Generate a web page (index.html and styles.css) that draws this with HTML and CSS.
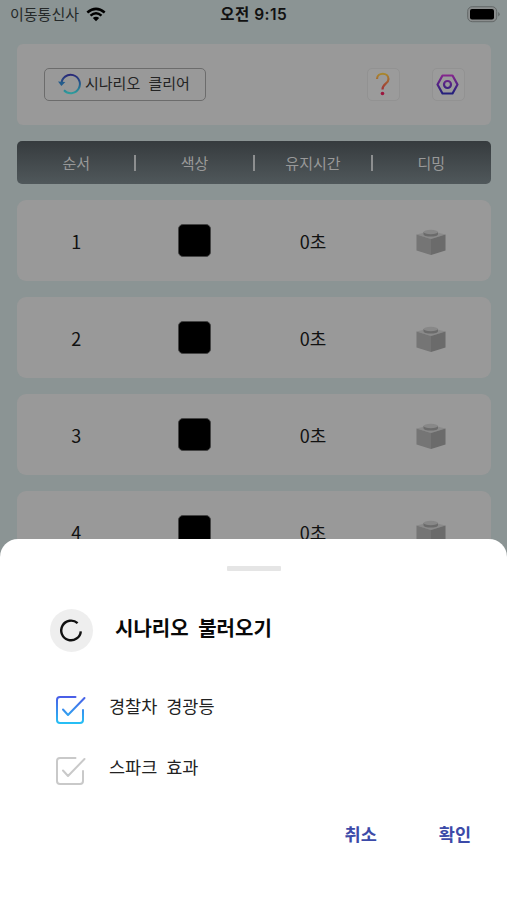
FILE: index.html
```html
<!DOCTYPE html>
<html lang="ko">
<head>
<meta charset="utf-8">
<meta name="viewport" content="width=device-width, initial-scale=1">
<title>시나리오</title>
<link rel="stylesheet" href="styles.css">
</head>
<body>
<svg class="defs" width="0" height="0" aria-hidden="true">
  <defs>
    <linearGradient id="refresh" x1="0" y1="0" x2="0" y2="1"><stop offset="0" stop-color="#292878"/><stop offset=".5" stop-color="#245c8c"/><stop offset="1" stop-color="#2e9c9c"/></linearGradient>
    <linearGradient id="gear" x1="0" y1="4" x2="0" y2="25" gradientUnits="userSpaceOnUse"><stop offset="0" stop-color="#962790"/><stop offset="1" stop-color="#24207c"/></linearGradient>
    <linearGradient id="help" x1="0" y1="5" x2="0" y2="27" gradientUnits="userSpaceOnUse"><stop offset="0" stop-color="#a98b2c"/><stop offset="1" stop-color="#9c163e"/></linearGradient>
    <linearGradient id="check" x1="0" y1="1" x2="0" y2="29" gradientUnits="userSpaceOnUse"><stop offset="0" stop-color="#4b5be6"/><stop offset="1" stop-color="#25c2f5"/></linearGradient>
    <symbol id="brick" viewBox="0 0 30 27">
      <path fill="#8a8a8a" d="M.5 5.500 15 2 29.500 5.500 15 10z"/>
      <path fill="#757575" d="M.5 5.500 15 10V26L.5 21.500z"/>
      <path fill="#6b6b6b" d="M15 10 29.500 5.500V21.500L15 26z"/>
      <path fill="#6b6b6b" d="M7.500 3v2.200c0 3.200 14.500 3.200 14.500 0V3z"/>
      <ellipse cx="14.750" cy="3" rx="7.250" ry="2.200" fill="#888"/>
    </symbol>
    <symbol id="box" viewBox="0 0 32 30">
      <path d="M21.500 2H6Q3 2 3 5V25Q3 28 6 28H26Q29 28 29 25V15M30.500 3 14 20 9 14.500" fill="none" stroke-width="2" stroke-linecap="round" stroke-linejoin="round"/>
    </symbol>
  </defs>
</svg>
<div class="screen">
  <header class="status">
    <div class="carrier">이동통신사
      <svg class="wifi" width="20" height="15" viewBox="0 0 20 15"><path d="M1.300 5.500Q10-1.800 18.700 5.500M4.500 8.600Q10 4 15.500 8.600" fill="none" stroke="#000" stroke-width="2.500"/><path d="M6.800 11Q10 8.300 13.200 11L10 14.300z"/></svg>
    </div>
    <div class="time">오전 9:15</div>
    <svg class="battery" width="34" height="17" viewBox="0 0 34 17"><rect x=".7" y=".7" width="29" height="15" rx="4.500" fill="#8b8e8e" stroke="#636868"/><rect x="3" y="3" width="24" height="10.500" rx="2"/><path d="M31.200 6q3 2.200 0 4.500z" fill="#636868"/></svg>
  </header>
  <section class="toolbar">
    <div class="clear">
      <svg width="24" height="22" viewBox="0 0 24 22"><path d="M3.500 11A9.200 9.200 0 1 1 6 17.300" fill="none" stroke="url(#refresh)" stroke-width="2"/><path d="M0 8.500 3.400 13 7.300 9z" fill="#245c8c"/></svg>
      <span>시나리오 클리어</span>
    </div>
    <div class="tools">
      <div class="tool"><svg width="32" height="32" viewBox="0 0 32 32"><path d="M10 11C10 4 21.500 4 21.500 11C21.500 16 15.500 15.500 15.500 21.500" fill="none" stroke="url(#help)" stroke-width="2.200"/><circle cx="15.500" cy="25.500" r="1.800" fill="#9c163e"/></svg></div>
      <div class="tool"><svg width="32" height="32" viewBox="0 0 32 32"><g fill="none" stroke="url(#gear)" stroke-width="2.200" stroke-linejoin="round"><path d="M10.500 7.500H20.500L25.500 16.500 20.500 25.500H10.500L5.500 16.500z"/><circle cx="15.500" cy="16.500" r="3.500"/></g></svg></div>
    </div>
  </section>
  <section class="columns head"><span>순서</span><span>색상</span><span>유지시간</span><span>디밍</span></section>
  <section class="columns row"><span>1</span><i class="swatch"></i><span>0초</span><svg class="brick"><use href="#brick"/></svg></section>
  <section class="columns row"><span>2</span><i class="swatch"></i><span>0초</span><svg class="brick"><use href="#brick"/></svg></section>
  <section class="columns row"><span>3</span><i class="swatch"></i><span>0초</span><svg class="brick"><use href="#brick"/></svg></section>
  <section class="columns row"><span>4</span><i class="swatch"></i><span>0초</span><svg class="brick"><use href="#brick"/></svg></section>
</div>
<div class="sheet">
  <div class="handle"></div>
  <div class="title">
    <div class="badge"><svg width="24" height="24" viewBox="0 0 24 24"><path d="M17.600 4.200A9.800 9.800 0 1 0 20.800 12.300" fill="none" stroke="#111" stroke-width="2.400"/></svg></div>
    <h1>시나리오 불러오기</h1>
  </div>
  <div class="option"><svg class="box on"><use href="#box"/></svg><span>경찰차 경광등</span></div>
  <div class="option"><svg class="box"><use href="#box"/></svg><span>스파크 효과</span></div>
  <div class="actions"><span>취소</span><span>확인</span></div>
</div>
</body>
</html>
```

FILE: styles.css
```css
* { box-sizing: border-box; }
body {
  margin: 0;
  width: 507px;
  height: 900px;
  overflow: hidden;
  position: relative;
  background: #8b9494;
  font-family: "Noto Sans CJK KR", sans-serif;
  color: #111;
}
svg { display: block; flex: none; }
.defs { position: absolute; }
.screen { height: 900px; padding: 0 16.500px 0 17px; overflow: hidden; }
.status {
  height: 44px;
  margin: 0 -10px 0 -7px;
  display: grid;
  grid-template-columns: 1fr auto 1fr;
  align-items: start;
  font-size: 15px;
  line-height: 20px;
  padding-top: 4px;
}
.carrier { display: flex; gap: 7px; color: #252929; }
.wifi { margin-top: 3px; }
.time { font-family: Inter, "Noto Sans CJK KR", sans-serif; font-size: 15.500px; font-weight: 600; letter-spacing: .5px; padding-top: 1px; margin-left: -3px; }
.battery { justify-self: end; margin: 2px 0 0; }
.toolbar {
  height: 81px;
  padding: 0 26px 0 27px;
  display: flex;
  align-items: center;
  justify-content: space-between;
  background: #999;
  border-radius: 6px;
}
.clear {
  width: 162px;
  height: 33px;
  padding-left: 13px;
  display: flex;
  align-items: center;
  gap: 3px;
  border: 1.500px solid #6c6c6c;
  border-radius: 5px;
  font-size: 15px;
  line-height: 20px;
  word-spacing: 4px;
  color: #242424;
  white-space: nowrap;
}
.clear svg { margin-top: -2px; }
.clear span { margin-top: -3px; }
.tools { display: flex; gap: 32px; }
.tool { width: 33px; height: 33px; border: 1px solid #929292; border-radius: 5px; background: #9b9b9b; }
.tool svg { margin: -1px; }
.columns { display: grid; grid-template-columns: repeat(4, 1fr); align-items: center; justify-items: center; }
.head {
  height: 43px;
  margin-top: 16px;
  border-radius: 5px;
  background: linear-gradient(#363b3e, #50585b);
  color: #999;
  font-size: 15px;
  line-height: 22px;
}
.head span { width: 100%; text-align: center; position: relative; }
.head span + span::before {
  content: "";
  position: absolute;
  left: -1px;
  top: 3px;
  width: 2px;
  height: 16px;
  background: #8d8f90;
}
.row { height: 81px; margin-top: 16px; background: #999; border-radius: 9px; font-size: 18px; line-height: 26px; }
.swatch { width: 33px; height: 33px; border-radius: 5px; background: #000; border: 1px solid #444; }
.brick { width: 30px; height: 27px; margin-top: 4px; }
.sheet {
  position: absolute;
  left: 0;
  right: 0;
  bottom: 0;
  height: 361px;
  padding-top: 27px;
  background: #fff;
  border-radius: 18px 18px 0 0;
}
.handle { width: 54px; height: 5px; margin: 0 auto; background: #e5e5e5; border-radius: 1px; }
.title { display: flex; align-items: center; gap: 22px; margin: 38px 0 0 50px; height: 43px; }
.badge { width: 43px; height: 43px; border-radius: 50%; background: #eee; display: grid; place-items: center; }
h1 { margin: -6px 0 0; font-size: 20px; line-height: 28px; font-weight: 700; word-spacing: 4px; color: #080808; }
.option { height: 61px; padding-left: 54px; display: flex; align-items: center; gap: 23px; font-size: 17.500px; line-height: 26px; word-spacing: 4px; color: #222; }
.title + .option { margin-top: 27px; }
.option span { margin-top: -8px; }
.box { width: 32px; height: 30px; stroke: #c9c9c9; }
.box.on { stroke: url(#check); }
.actions { display: flex; justify-content: flex-end; gap: 62px; padding-right: 36px; margin-top: 20px; font-size: 17.500px; line-height: 26px; font-weight: 700; color: #3c4aa8; }
```
